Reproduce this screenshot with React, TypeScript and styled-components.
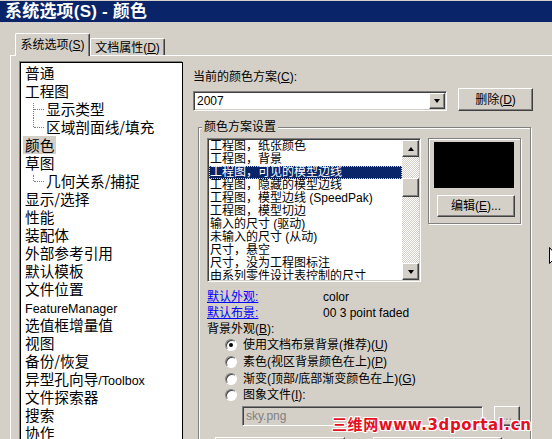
import React from "react";
import styled, { createGlobalStyle, css } from "styled-components";

const UI = `"Liberation Sans", "Noto Sans CJK SC", sans-serif`;
const CJK = `"Noto Sans CJK SC", "Liberation Sans", sans-serif`;

const GlobalStyle = createGlobalStyle`
  html, body { margin: 0; padding: 0; background: #d4d0c8; overflow: hidden; }
  body { font-family: ${UI}; font-size: 12px; color: #000; }
  u { text-decoration-thickness: 1px; text-underline-offset: 1px; }
`;

const Window = styled.div`
  position: relative;
  width: 552px;
  height: 439px;
  overflow: hidden;
  box-sizing: border-box;
  padding-top: 1px;
  background: #d4d0c8;
`;

const TitleBar = styled.div`
  height: 21px;
  padding-left: 5px;
  background: #0a246a;
  color: #fff;
  font: bold 17px/21px ${UI};
  letter-spacing: 0.2px;
  white-space: nowrap;
`;

const TabStrip = styled.div`
  display: flex;
  align-items: flex-end;
  height: 33px;
  padding-left: 15px;
`;

const Tab = styled.div<{ $active?: boolean }>`
  position: relative;
  z-index: ${(p) => (p.$active ? 2 : 1)};
  box-sizing: border-box;
  width: 75px;
  height: ${(p) => (p.$active ? 23 : 17)}px;
  margin-bottom: ${(p) => (p.$active ? -1 : 0)}px;
  padding-top: ${(p) => (p.$active ? 0 : 2)}px;
  display: flex;
  align-items: center;
  justify-content: center;
  background: #d4d0c8;
  border-left: 1px solid #fff;
  border-top: 1px solid #fff;
  border-right: 1px solid #404040;
  border-top-left-radius: 2px;
  border-top-right-radius: 2px;
  box-shadow: inset -1px 0 0 #808080;
  font-size: 12px;
  line-height: 14px;
  white-space: nowrap;
`;

const TabPage = styled.div`
  display: flex;
  align-items: flex-start;
  gap: 10px;
  margin-left: 10px;
  padding: 6px 0 0 9px;
  border-top: 1px solid #fff;
  border-left: 1px solid #fff;
`;

const Tree = styled.div`
  flex: none;
  box-sizing: border-box;
  width: 163px;
  height: 400px;
  padding: 1px 0 0 2px;
  background: #fff;
  border: 1px solid #000;
  box-shadow: -1px -1px 0 #808080;
  font-family: ${CJK};
  font-size: 14.67px;
`;

const TreeItem = styled.div<{ $child?: boolean; $first?: boolean; $last?: boolean }>`
  position: relative;
  height: 18px;
  line-height: 18px;
  white-space: nowrap;
  padding-left: ${(p) => (p.$child ? 21 : 0)}px;
  ${(p) =>
    p.$child &&
    css`
      &::before {
        content: "";
        position: absolute;
        left: 10px;
        top: ${p.$first ? 3 : 0}px;
        height: ${p.$last ? 9 - (p.$first ? 3 : 0) : 18 - (p.$first ? 3 : 0)}px;
        border-left: 1px dotted #808080;
      }
      &::after {
        content: "";
        position: absolute;
        left: 11px;
        top: 9px;
        width: 10px;
        border-top: 1px dotted #808080;
      }
    `}
`;

const TreeText = styled.span<{ $selected?: boolean }>`
  display: inline-block;
  padding: 0 2px;
  line-height: 18px;
  background: ${(p) => (p.$selected ? "#d4d0c8" : "transparent")};
`;

const Latin = styled.span`
  font-family: "Liberation Sans", sans-serif;
  font-size: 12.5px;
`;

const Right = styled.div`
  flex: none;
  width: 345px;
  display: flex;
  flex-direction: column;
`;

const FieldLabel = styled.div`
  margin-top: 8px;
  line-height: 14px;
  white-space: nowrap;
`;

const ComboRow = styled.div`
  display: flex;
  align-items: flex-end;
  margin-top: 4px;
`;

const sunken = css`
  box-sizing: border-box;
  border: 1px solid;
  border-color: #808080 #fff #fff #808080;
  box-shadow: inset 1px 1px 0 #404040, inset -1px -1px 0 #d4d0c8;
  padding: 1px;
`;

const raised = css`
  box-sizing: border-box;
  background: #d4d0c8;
  border: 1px solid;
  border-color: #fff #404040 #404040 #fff;
  box-shadow: inset -1px -1px 0 #808080;
`;

const Combo = styled.div`
  ${sunken};
  width: 254px;
  height: 20px;
  display: flex;
  background: #fff;
`;

const ComboText = styled.div`
  flex: 1;
  padding-left: 2px;
  line-height: 16px;
`;

const ArrowButton = styled.div<{ $up?: boolean }>`
  ${raised};
  flex: none;
  width: 16px;
  height: 16px;
  display: flex;
  align-items: center;
  justify-content: center;
  &::after {
    content: "";
    width: 0;
    height: 0;
    border-left: 3.5px solid transparent;
    border-right: 3.5px solid transparent;
    ${(p) =>
      p.$up
        ? css`border-bottom: 4px solid #000;`
        : css`border-top: 4px solid #000;`}
  }
`;

const Button = styled.div<{ $w: number; $h?: number; $disabled?: boolean }>`
  ${raised};
  flex: none;
  width: ${(p) => p.$w}px;
  height: ${(p) => p.$h ?? 23}px;
  display: flex;
  align-items: center;
  justify-content: center;
  font-size: 12px;
  line-height: 14px;
  white-space: nowrap;
  color: ${(p) => (p.$disabled ? "#808080" : "#000")};
  text-shadow: ${(p) => (p.$disabled ? "1px 1px 0 #fff" : "none")};
`;

const DeleteButton = styled(Button)`
  margin-left: 11px;
`;

const Group = styled.fieldset`
  box-sizing: border-box;
  width: 333px;
  min-width: 0;
  margin: 9px 0 0 5px;
  padding: 3px 0 0 8px;
  border: 1px solid #808080;
  box-shadow: inset 1px 1px 0 #fff, 1px 1px 0 #fff;
`;

const Legend = styled.legend`
  margin-left: -5px;
  padding: 0 2px;
  line-height: 15px;
  background: #d4d0c8;
  white-space: nowrap;
`;

const SchemeRow = styled.div`
  display: flex;
  align-items: flex-start;
  gap: 7px;
`;

const ListBox = styled.div`
  ${sunken};
  width: 214px;
  height: 144px;
  display: flex;
  background: #fff;
`;

const ListItems = styled.div`
  flex: 1;
  overflow: hidden;
`;

const ListItem = styled.div<{ $selected?: boolean }>`
  height: 13px;
  line-height: 13px;
  padding-left: 1px;
  white-space: nowrap;
  font-size: 12px;
  background: ${(p) => (p.$selected ? "#0a246a" : "transparent")};
  color: ${(p) => (p.$selected ? "#fff" : "#000")};
  ${(p) =>
    p.$selected &&
    css`
      outline: 1px dotted #d8d890;
      outline-offset: -1px;
    `}
`;

const ScrollBar = styled.div`
  flex: none;
  width: 17px;
  display: flex;
  flex-direction: column;
`;

const ScrollButton = styled(ArrowButton)`
  width: 17px;
  height: 17px;
`;

const Track = styled.div`
  flex: 1;
  background: repeating-conic-gradient(#fff 0 25%, #d4d0c8 0 50%) 0 0 / 2px 2px;
`;

const Thumb = styled.div`
  ${raised};
  width: 17px;
  height: 19px;
  margin-top: 21px;
`;

const PreviewFrame = styled.div`
  box-sizing: border-box;
  width: 93px;
  height: 86px;
  padding: 3px 0 0 5px;
  border: 1px solid #808080;
  box-shadow: inset 1px 1px 0 #fff, 1px 1px 0 #fff;
`;

const Swatch = styled.div`
  width: 80px;
  height: 46px;
  background: #000;
`;

const EditButton = styled(Button)`
  margin: 7px 0 0 3px;
`;

const InfoGrid = styled.div`
  display: grid;
  grid-template-columns: 116px 1fr;
  grid-auto-rows: 16px;
  align-items: center;
  margin-top: 7px;
  line-height: 16px;
  white-space: nowrap;
`;

const Link = styled.span`
  color: #0000ff;
  text-decoration: underline;
  text-underline-offset: 1px;
`;

const SectionLabel = styled.div`
  line-height: 16px;
  white-space: nowrap;
`;

const RadioList = styled.div`
  display: flex;
  flex-direction: column;
  padding-left: 18px;
`;

const RadioRow = styled.div`
  display: flex;
  align-items: center;
  height: 16.7px;
  gap: 6px;
  white-space: nowrap;
  line-height: 14px;
`;

const RadioCircle = styled.span<{ $checked?: boolean }>`
  flex: none;
  box-sizing: border-box;
  width: 12px;
  height: 12px;
  border-radius: 50%;
  background: #fff;
  border: 1px solid;
  border-color: #808080 #fff #fff #808080;
  box-shadow: inset 1px 1px 0 #404040;
  display: flex;
  align-items: center;
  justify-content: center;
  &::after {
    content: "";
    width: 4px;
    height: 4px;
    border-radius: 50%;
    background: ${(p) => (p.$checked ? "#000" : "transparent")};
  }
`;

const FileRow = styled.div`
  display: flex;
  align-items: center;
  gap: 11px;
  margin-top: 2px;
  padding-left: 35px;
`;

const FileInput = styled.div`
  ${sunken};
  width: 241px;
  height: 20px;
  padding-left: 3px;
  line-height: 16px;
  color: #808080;
  background: #d4d0c8;
`;

const BottomButtons = styled.div`
  display: flex;
  gap: 28px;
  margin-top: 11px;
  padding-left: 8px;
`;

const Watermark = styled.div`
  position: absolute;
  left: 332px;
  top: 417px;
  font: bold 15px/16px "DejaVu Sans", "Noto Sans CJK SC", sans-serif;
  letter-spacing: 0.6px;
  color: #e4101e;
  white-space: nowrap;
  text-shadow:
    1px 0 0 #fff, -1px 0 0 #fff, 0 1px 0 #fff, 0 -1px 0 #fff,
    1px 1px 0 #fff, -1px -1px 0 #fff, 1px -1px 0 #fff, -1px 1px 0 #fff;
`;

const Cursor = styled.svg`
  position: absolute;
  left: 548px;
  top: 247px;
`;

const treeItems: { text: React.ReactNode; child?: boolean; first?: boolean; last?: boolean; selected?: boolean }[] = [
  { text: "普通" },
  { text: "工程图" },
  { text: "显示类型", child: true, first: true },
  { text: "区域剖面线/填充", child: true, last: true },
  { text: "颜色", selected: true },
  { text: "草图" },
  { text: "几何关系/捕捉", child: true, first: true, last: true },
  { text: "显示/选择" },
  { text: "性能" },
  { text: "装配体" },
  { text: "外部参考引用" },
  { text: "默认模板" },
  { text: "文件位置" },
  { text: <Latin>FeatureManager</Latin> },
  { text: "选值框增量值" },
  { text: "视图" },
  { text: "备份/恢复" },
  { text: <>异型孔向导<Latin>/Toolbox</Latin></> },
  { text: "文件探索器" },
  { text: "搜索" },
  { text: "协作" },
];

const schemeItems = [
  "工程图，纸张颜色",
  "工程图，背景",
  "工程图，可见的模型边线",
  "工程图，隐藏的模型边线",
  "工程图，模型边线 (SpeedPak)",
  "工程图，模型切边",
  "输入的尺寸 (驱动)",
  "未输入的尺寸 (从动)",
  "尺寸，悬空",
  "尺寸，没为工程图标注",
  "由系列零件设计表控制的尺寸",
];

const radios = [
  { label: "使用文档布景背景(推荐)", key: "U", checked: true },
  { label: "素色(视区背景颜色在上)", key: "P" },
  { label: "渐变(顶部/底部渐变颜色在上)", key: "G" },
  { label: "图象文件", key: "I", colon: true },
];

export default function App() {
  return (
    <>
      <GlobalStyle />
      <Window>
        <TitleBar>系统选项(S) - 颜色</TitleBar>
        <TabStrip>
          <Tab $active>
            系统选项(<u>S</u>)
          </Tab>
          <Tab>
            文档属性(<u>D</u>)
          </Tab>
        </TabStrip>
        <TabPage>
          <Tree>
            {treeItems.map((it, i) => (
              <TreeItem key={i} $child={it.child} $first={it.first} $last={it.last}>
                <TreeText $selected={it.selected}>{it.text}</TreeText>
              </TreeItem>
            ))}
          </Tree>
          <Right>
            <FieldLabel>
              当前的颜色方案(<u>C</u>):
            </FieldLabel>
            <ComboRow>
              <Combo>
                <ComboText>2007</ComboText>
                <ArrowButton />
              </Combo>
              <DeleteButton $w={75}>
                删除(<u>D</u>)
              </DeleteButton>
            </ComboRow>
            <Group>
              <Legend>颜色方案设置</Legend>
              <SchemeRow>
                <ListBox>
                  <ListItems>
                    {schemeItems.map((s, i) => (
                      <ListItem key={i} $selected={i === 2}>
                        {s}
                      </ListItem>
                    ))}
                  </ListItems>
                  <ScrollBar>
                    <ScrollButton $up />
                    <Track>
                      <Thumb />
                    </Track>
                    <ScrollButton />
                  </ScrollBar>
                </ListBox>
                <PreviewFrame>
                  <Swatch />
                  <EditButton $w={78} $h={22}>
                    编辑(<u>E</u>)...
                  </EditButton>
                </PreviewFrame>
              </SchemeRow>
              <InfoGrid>
                <Link>默认外观:</Link>
                <span>color</span>
                <Link>默认布景:</Link>
                <span>00 3 point faded</span>
              </InfoGrid>
              <SectionLabel>
                背景外观(<u>B</u>):
              </SectionLabel>
              <RadioList>
                {radios.map((r) => (
                  <RadioRow key={r.key}>
                    <RadioCircle $checked={r.checked} />
                    <span>
                      {r.label}(<u>{r.key}</u>){r.colon ? ":" : ""}
                    </span>
                  </RadioRow>
                ))}
              </RadioList>
              <FileRow>
                <FileInput>sky.png</FileInput>
                <Button $w={26} $h={20} $disabled>
                  ...
                </Button>
              </FileRow>
              <BottomButtons>
                <Button $w={130} />
                <Button $w={129} />
              </BottomButtons>
            </Group>
          </Right>
        </TabPage>
        <Watermark>三维网www.3dportal.cn</Watermark>
        <Cursor width="12" height="20" viewBox="0 0 12 20">
          <path d="M1.5 0.5 L1.5 16.5 L5.2 12.8 L7.8 18.8 L10 17.8 L7.5 12 L11.5 12 Z" fill="#fff" stroke="#000" strokeWidth="1" />
        </Cursor>
      </Window>
    </>
  );
}
